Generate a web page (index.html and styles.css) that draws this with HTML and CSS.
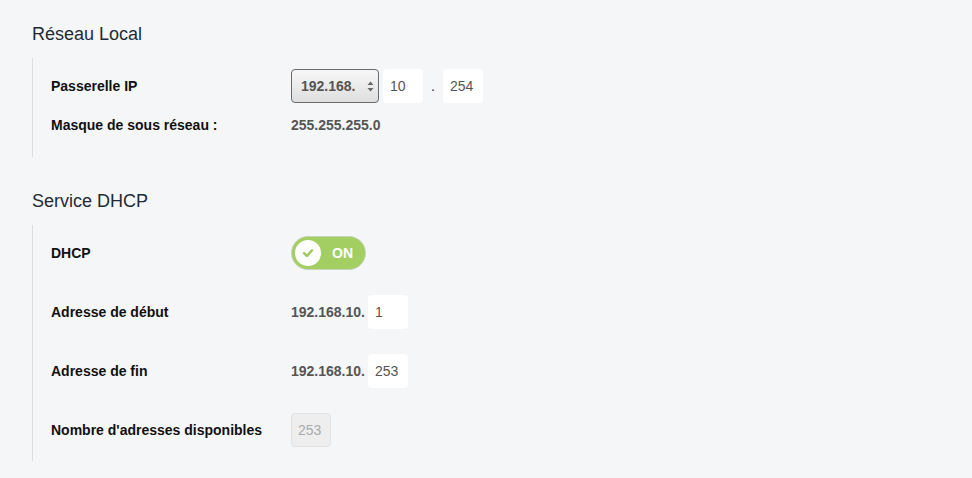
FILE: index.html
```html
<!DOCTYPE html>
<html lang="fr">
<head>
<meta charset="utf-8">
<title>Réseau</title>
<link rel="stylesheet" href="styles.css">
</head>
<body>
<div class="page">
  <section class="section">
    <h2 class="title">Réseau Local</h2>
    <div class="block block-lan">
      <div class="row">
        <div class="label">Passerelle IP</div>
        <div class="value">
          <div class="select">
            <span class="select-text">192.168.</span>
            <svg class="select-arrows" width="7" height="11" viewBox="0 0 7 11"><path d="M3.5 0.5 L6.5 4 L0.5 4 Z" fill="#666"/><path d="M3.5 10.5 L6.5 7 L0.5 7 Z" fill="#666"/></svg>
          </div>
          <div class="input">10</div>
          <span class="sep">.</span>
          <div class="input">254</div>
        </div>
      </div>
      <div class="row row-short">
        <div class="label">Masque de sous réseau :</div>
        <div class="value"><span class="static">255.255.255.0</span></div>
      </div>
    </div>
  </section>

  <section class="section">
    <h2 class="title">Service DHCP</h2>
    <div class="block block-dhcp">
      <div class="row">
        <div class="label">DHCP</div>
        <div class="value">
          <div class="toggle">
            <span class="knob">
              <svg width="14" height="14" viewBox="0 0 14 14"><path d="M3 7.2 L6 10 L11 4.3" fill="none" stroke="#9bc95a" stroke-width="2.4" stroke-linecap="round" stroke-linejoin="round"/></svg>
            </span>
            <span class="toggle-text">ON</span>
          </div>
        </div>
      </div>
      <div class="row">
        <div class="label">Adresse de début</div>
        <div class="value">
          <span class="static prefix">192.168.10.</span>
          <div class="input">1</div>
        </div>
      </div>
      <div class="row">
        <div class="label">Adresse de fin</div>
        <div class="value">
          <span class="static prefix">192.168.10.</span>
          <div class="input">253</div>
        </div>
      </div>
      <div class="row">
        <div class="label">Nombre d'adresses disponibles</div>
        <div class="value">
          <div class="input input-disabled">253</div>
        </div>
      </div>
    </div>
  </section>
</div>
</body>
</html>
```

FILE: styles.css
```css
html, body {
  margin: 0;
  padding: 0;
  background: #f5f6f8;
}
body {
  font-family: "Liberation Sans", Arial, sans-serif;
  color: #000;
}
.page {
  padding: 23px 0 0 32px;
}
.section + .section {
  margin-top: 33px;
}
.title {
  margin: 0;
  font-size: 18px;
  line-height: 22px;
  font-weight: normal;
  color: #1e2b37;
}
.block {
  margin-top: 13px;
  border-left: 1px solid #dcdde0;
  padding-left: 18px;
  display: flex;
  flex-direction: column;
}
.block-lan {
  padding-top: 11px;
  padding-bottom: 15px;
  gap: 5px;
}
.block-dhcp {
  padding-top: 11px;
  padding-bottom: 14px;
  gap: 25px;
}
.row {
  display: flex;
  align-items: center;
  height: 34px;
}
.label {
  width: 240px;
  flex: none;
  font-size: 14px;
  font-weight: bold;
  color: #111;
}
.value {
  display: flex;
  align-items: center;
}
.static {
  font-size: 14px;
  font-weight: bold;
  color: #555;
}
.prefix {
  margin-right: 3px;
}
.select {
  box-sizing: border-box;
  width: 88px;
  height: 34px;
  border: 1px solid #6a6a6a;
  border-radius: 4px;
  background: linear-gradient(#f8f8f8, #dedede);
  display: flex;
  align-items: center;
  padding: 0 4px 0 9px;
  margin-right: 4px;
}
.select-text {
  font-size: 14px;
  font-weight: bold;
  color: #555;
  flex: 1;
}
.select-arrows {
  display: block;
}
.input {
  box-sizing: border-box;
  width: 40px;
  height: 34px;
  background: #fff;
  border-radius: 4px;
  padding-left: 7px;
  font-size: 14px;
  color: #555;
  display: flex;
  align-items: center;
}
.input-disabled {
  background: #eeeeee;
  border: 1px solid #e2e2e2;
  padding-left: 6px;
  color: #aaa;
}
.sep {
  width: 20px;
  text-align: center;
  font-size: 14px;
  color: #333;
}
.toggle {
  box-sizing: border-box;
  width: 75px;
  height: 34px;
  border-radius: 17px;
  background: #a3cf62;
  border: 1px solid #c9d3bd;
  display: flex;
  align-items: center;
  padding-left: 3px;
}
.knob {
  width: 26px;
  height: 26px;
  border-radius: 50%;
  background: #fff;
  display: flex;
  align-items: center;
  justify-content: center;
}
.toggle-text {
  margin-left: 11px;
  font-size: 14px;
  font-weight: bold;
  color: #fff;
}
```
